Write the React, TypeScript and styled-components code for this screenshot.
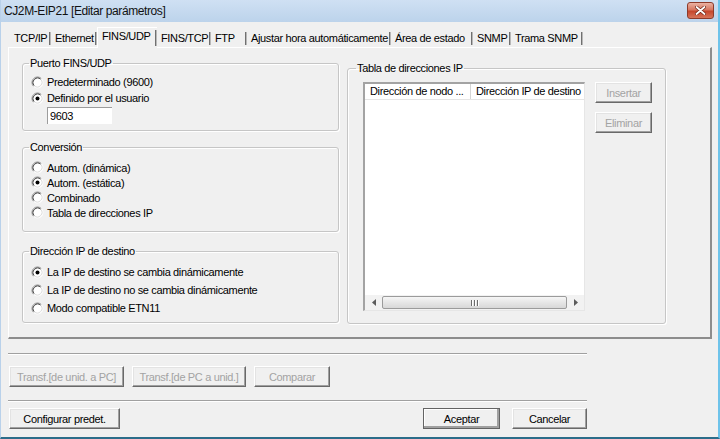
import styled, { createGlobalStyle, css } from "styled-components";

const GlobalStyle = createGlobalStyle`
  html, body {
    margin: 0;
    padding: 0;
    background: #f0f0f0;
  }
`;

const tabs = [
  { label: "TCP/IP", w: 41 },
  { label: "Ethernet", w: 46 },
  { label: "FINS/UDP", w: 60, active: true },
  { label: "FINS/TCP", w: 54 },
  { label: "FTP", w: 36 },
  { label: "Ajustar hora automáticamente", w: 144 },
  { label: "Área de estado", w: 82 },
  { label: "SNMP", w: 38 },
  { label: "Trama SNMP", w: 72 },
];

const Window = styled.div`
  width: 720px;
  height: 439px;
  box-sizing: border-box;
  display: flex;
  flex-direction: column;
  background: #f0f0f0;
  border-left: 1px solid #b9d1ea;
  border-right: 2px solid #6ec3ea;
  border-bottom: 2px solid #2c6d8a;
  font: 11px "Liberation Sans", Arial, sans-serif;
  letter-spacing: -0.35px;
  color: #000;
  overflow: hidden;
`;

const TitleBar = styled.div`
  flex: none;
  height: 22px;
  display: flex;
  align-items: flex-start;
  justify-content: space-between;
  padding: 0 4px 0 3px;
  background: linear-gradient(#cfe0f3, #bcd3eb);
`;

const Title = styled.span`
  font: 12px "Liberation Sans", Arial, sans-serif;
  letter-spacing: -0.4px;
  line-height: 22px;
  color: #111;
`;

const CloseButton = styled.div`
  width: 27px;
  height: 17px;
  margin-top: 2px;
  box-sizing: border-box;
  display: flex;
  align-items: center;
  justify-content: center;
  border: 1px solid #8d3b2b;
  border-radius: 3px;
  background: linear-gradient(#eab2a3, #d77761 45%, #c5462c 55%, #d6745a);
`;

const Body = styled.div`
  flex: 1;
  display: flex;
  flex-direction: column;
  padding: 0 6px 0 7px;
`;

const TabStrip = styled.div`
  height: 25px;
  display: flex;
  align-items: flex-end;
  padding-left: 2px;
`;

const Tab = styled.div<{ $w: number; $active?: boolean }>`
  position: relative;
  box-sizing: border-box;
  width: ${({ $w }) => $w}px;
  height: 17px;
  padding-left: 4px;
  line-height: 17px;
  white-space: nowrap;

  ${({ $active }) =>
    $active &&
    css`
      height: 21px;
      border-left: 1px solid #fff;
      border-top: 1px solid #fff;
      background: #f0f0f0;
      margin-bottom: -1px;
      z-index: 1;
    `}

  &::after {
    content: "";
    position: absolute;
    right: 0;
    top: 2px;
    bottom: 2px;
    width: 2px;
    background: linear-gradient(to right, #707070 50%, #b8b8b8 50%);
  }
`;

const Panel = styled.div`
  height: 292px;
  box-sizing: border-box;
  display: flex;
  gap: 8px;
  padding: 9px 0 0 13px;
  border-top: 1px solid #fff;
  border-left: 1px solid #fff;
  border-right: 2px solid #8d8d8d;
  border-bottom: 2px solid #8d8d8d;
`;

const Column = styled.div`
  display: flex;
  flex-direction: column;
`;

const Group = styled.fieldset<{ $w: number; $h: number; $pt: number; $lx?: number; $top?: number }>`
  box-sizing: border-box;
  width: ${({ $w }) => $w}px;
  height: ${({ $h }) => $h}px;
  min-width: 0;
  margin: ${({ $top = 0 }) => $top}px 0 0;
  padding: ${({ $pt, $lx = 6 }) => `${$pt}px 0 0 ${$lx}px`};
  border: 1px solid #c6c6c6;
  border-radius: 3px;
  box-shadow: 1px 1px 0 #fff, inset 1px 1px 0 #fff;
`;

const Legend = styled.legend`
  padding: 0 1px;
  line-height: 13px;
`;

const RadioList = styled.div<{ $rowH: number }>`
  display: grid;
  grid-auto-rows: ${({ $rowH }) => $rowH}px;
  padding-left: 2px;
`;

const RadioRow = styled.label`
  display: flex;
  align-items: center;
  gap: 3px;
  white-space: nowrap;
`;

const PortField = styled.input`
  display: block;
  box-sizing: border-box;
  width: 65px;
  height: 17px;
  margin: 1px 0 0 18px;
  padding: 0 0 0 2px;
  font: inherit;
  letter-spacing: inherit;
  color: #000;
  background: #fff;
  border: none;
  border-top: 1px solid #9c9c9c;
  border-left: 1px solid #9c9c9c;
  outline: none;
`;

const TableArea = styled.div`
  display: flex;
  gap: 10px;
  margin-left: 7px;
`;

const ListView = styled.div`
  width: 222px;
  height: 229px;
  box-sizing: border-box;
  display: flex;
  flex-direction: column;
  background: #fff;
  border-top: 2px solid #a3a3a3;
  border-left: 2px solid #a3a3a3;
  border-right: 1px solid #e6e6e6;
  border-bottom: 1px solid #e6e6e6;
`;

const HeaderRow = styled.div`
  display: flex;
  height: 15px;
  border-bottom: 1px solid #e5e5e5;
`;

const HeaderCell = styled.div<{ $w?: number }>`
  ${({ $w }) => ($w ? `width: ${$w}px; flex: none;` : "flex: 1;")}
  box-sizing: border-box;
  padding-left: 5px;
  line-height: 15px;
  white-space: nowrap;
  overflow: hidden;
  border-right: 1px solid #d5d5d5;

  &:last-child {
    border-right: none;
  }
`;

const ListBody = styled.div`
  flex: 1;
`;

const ScrollBar = styled.div`
  height: 15px;
  display: flex;
  background: #f2f2f2;
`;

const ScrollArrow = styled.div`
  width: 17px;
  flex: none;
  display: flex;
  align-items: center;
  justify-content: center;
`;

const Thumb = styled.div`
  flex: 1;
  margin: 1px 0;
  box-sizing: border-box;
  display: flex;
  align-items: center;
  justify-content: center;
  gap: 2px;
  border: 1px solid #9b9b9b;
  border-radius: 2px;
  background: linear-gradient(#f6f6f6, #e6e6e6 50%, #d8d8d8);
`;

const GripLine = styled.span`
  width: 1px;
  height: 6px;
  background: #6d6d6d;
  box-shadow: 1px 0 0 #fff;
`;

const SideButtons = styled.div`
  display: flex;
  flex-direction: column;
  gap: 9px;
`;

const Button = styled.button<{ $w: number; $default?: boolean }>`
  box-sizing: border-box;
  width: ${({ $w }) => $w}px;
  height: 21px;
  padding: 0;
  font: inherit;
  letter-spacing: inherit;
  color: #000;
  background: #f0f0f0;
  border: 1px solid;
  border-color: #fff #696969 #696969 #fff;
  box-shadow: inset -1px -1px 0 #a0a0a0, inset 1px 1px 0 #e3e3e3;
  white-space: nowrap;

  &:disabled {
    color: #a3a3a3;
  }

  ${({ $default }) =>
    $default &&
    css`
      outline: 1px solid #646464;
      outline-offset: -1px;
      box-shadow: inset -2px -2px 0 #a0a0a0, inset 1px 1px 0 #fff;
    `}
`;

const Separator = styled.div<{ $top: number }>`
  width: 579px;
  margin-top: ${({ $top }) => $top}px;
  border-top: 1px solid #a0a0a0;
  border-bottom: 1px solid #fff;
`;

const ButtonRow = styled.div<{ $top: number; $gap: number }>`
  width: 579px;
  display: flex;
  gap: ${({ $gap }) => $gap}px;
  margin-top: ${({ $top }) => $top}px;
  padding-left: 1px;
  box-sizing: border-box;
`;

const Spacer = styled.div`
  flex: 1;
`;

const RadioMark = ({ checked }: { checked?: boolean }) => (
  <svg width="13" height="13" viewBox="0 0 13 13">
    <circle cx="6.5" cy="6.5" r="5.5" fill="#fff" />
    <path d="M2.61 10.39 A5.5 5.5 0 0 1 10.39 2.61" fill="none" stroke="#8a8a8a" />
    <path d="M10.39 2.61 A5.5 5.5 0 0 1 2.61 10.39" fill="none" stroke="#fdfdfd" />
    <path d="M3.32 9.68 A4.5 4.5 0 0 1 9.68 3.32" fill="none" stroke="#3f3f3f" />
    <path d="M9.68 3.32 A4.5 4.5 0 0 1 3.32 9.68" fill="none" stroke="#dcdcdc" />
    {checked && <circle cx="6.5" cy="6.5" r="2" fill="#000" />}
  </svg>
);

const Radio = ({ label, checked }: { label: string; checked?: boolean }) => (
  <RadioRow>
    <RadioMark checked={checked} />
    {label}
  </RadioRow>
);

const Arrow = ({ dir }: { dir: "left" | "right" }) => (
  <svg width="4" height="7" viewBox="0 0 4 7">
    <path d={dir === "left" ? "M4 0 L0 3.5 L4 7 Z" : "M0 0 L4 3.5 L0 7 Z"} fill="#5c5c5c" />
  </svg>
);

const CloseIcon = () => (
  <svg width="11" height="9" viewBox="0 0 11 9">
    <path d="M1.5 1 L9.5 8 M9.5 1 L1.5 8" stroke="#6a2216" strokeWidth="3.2" strokeLinecap="round" />
    <path d="M1.5 1 L9.5 8 M9.5 1 L1.5 8" stroke="#fff" strokeWidth="1.8" strokeLinecap="round" />
  </svg>
);

export default function App() {
  return (
    <>
      <GlobalStyle />
      <Window>
        <TitleBar>
          <Title>CJ2M-EIP21 [Editar parámetros]</Title>
          <CloseButton>
            <CloseIcon />
          </CloseButton>
        </TitleBar>

        <Body>
          <TabStrip>
            {tabs.map((t) => (
              <Tab key={t.label} $w={t.w} $active={t.active}>
                {t.label}
              </Tab>
            ))}
          </TabStrip>

          <Panel>
            <Column>
              <Group $w={317} $h={74} $pt={4}>
                <Legend>Puerto FINS/UDP</Legend>
                <RadioList $rowH={16}>
                  <Radio label="Predeterminado (9600)" />
                  <Radio label="Definido por el usuario" checked />
                </RadioList>
                <PortField readOnly defaultValue="9603" />
              </Group>

              <Group $w={317} $h={91} $pt={6} $top={10}>
                <Legend>Conversión</Legend>
                <RadioList $rowH={15}>
                  <Radio label="Autom. (dinámica)" />
                  <Radio label="Autom. (estática)" checked />
                  <Radio label="Combinado" />
                  <Radio label="Tabla de direcciones IP" />
                </RadioList>
              </Group>

              <Group $w={317} $h={78} $pt={5} $top={13}>
                <Legend>Dirección IP de destino</Legend>
                <RadioList $rowH={18}>
                  <Radio label="La IP de destino se cambia dinámicamente" checked />
                  <Radio label="La IP de destino no se cambia dinámicamente" />
                  <Radio label="Modo compatible ETN11" />
                </RadioList>
              </Group>
            </Column>

            <Column>
              <Group $w={319} $h={262} $pt={7} $lx={8} $top={5}>
                <Legend>Tabla de direcciones IP</Legend>
                <TableArea>
                  <ListView>
                    <HeaderRow>
                      <HeaderCell $w={106}>Dirección de nodo ...</HeaderCell>
                      <HeaderCell>Dirección IP de destino</HeaderCell>
                    </HeaderRow>
                    <ListBody />
                    <ScrollBar>
                      <ScrollArrow>
                        <Arrow dir="left" />
                      </ScrollArrow>
                      <Thumb>
                        <GripLine />
                        <GripLine />
                        <GripLine />
                      </Thumb>
                      <ScrollArrow>
                        <Arrow dir="right" />
                      </ScrollArrow>
                    </ScrollBar>
                  </ListView>
                  <SideButtons>
                    <Button $w={57} disabled>
                      Insertar
                    </Button>
                    <Button $w={57} disabled>
                      Eliminar
                    </Button>
                  </SideButtons>
                </TableArea>
              </Group>
            </Column>
          </Panel>

          <Separator $top={14} />
          <ButtonRow $top={11} $gap={8}>
            <Button $w={115} disabled>
              Transf.[de unid. a PC]
            </Button>
            <Button $w={114} disabled>
              Transf.[de PC a unid.]
            </Button>
            <Button $w={76} disabled>
              Comparar
            </Button>
          </ButtonRow>

          <Separator $top={13} />
          <ButtonRow $top={6} $gap={12}>
            <Button $w={111}>Configurar predet.</Button>
            <Spacer />
            <Button $w={77} $default>
              Aceptar
            </Button>
            <Button $w={75}>Cancelar</Button>
          </ButtonRow>
        </Body>
      </Window>
    </>
  );
}
